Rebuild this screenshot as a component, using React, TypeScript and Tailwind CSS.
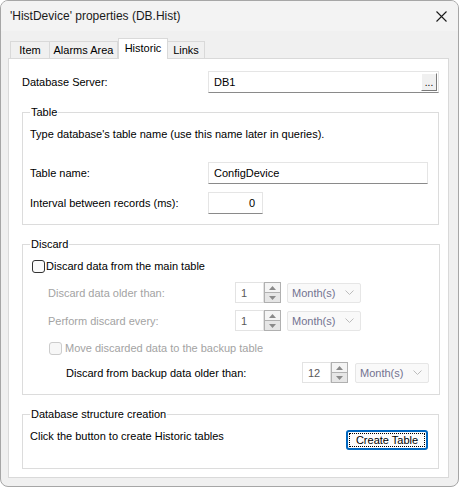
import React from 'react';

const tabs = [
    { id: 'item', label: 'Item', w: 'w-[40px]' },
    { id: 'alarms', label: 'Alarms Area', w: 'w-[69px]' },
    { id: 'historic', label: 'Historic', w: 'w-[50px]' },
    { id: 'links', label: 'Links', w: 'w-[38px]' },
];

const Spinner: React.FC<{ value: string }> = ({ value }) => (
    <div className="flex h-[21px]">
        <div className="w-[29px] h-full border border-[#e3e3e3] bg-white text-[#5a5a5a] pl-[5px] flex items-center">{value}</div>
        <div className="w-[17px] h-full flex flex-col">
            <div className="flex-1 border border-[#b0b0b0] bg-[#f4f4f4] flex items-center justify-center">
                <svg width="7" height="4" viewBox="0 0 7 4"><path d="M0 4 L3.5 0 L7 4 Z" fill="#8a8a8a" /></svg>
            </div>
            <div className="flex-1 border border-t-0 border-[#b0b0b0] bg-[#e6e6e6] flex items-center justify-center">
                <svg width="7" height="4" viewBox="0 0 7 4"><path d="M0 0 L3.5 4 L7 0 Z" fill="#8a8a8a" /></svg>
            </div>
        </div>
    </div>
);

const Combo: React.FC<{ gap: string }> = ({ gap }) => (
    <div className={`${gap} w-[74px] h-[20px] border border-[#e6e6e6] bg-[#f9f9f9] rounded-[2px] flex items-center justify-between pl-[4px] pr-[6px] text-[#727290]`}>
        <span>Month(s)</span>
        <svg width="9" height="5" viewBox="0 0 9 5"><path d="M0.5 0.5 L4.5 4.5 L8.5 0.5" stroke="#bcbcbc" fill="none" /></svg>
    </div>
);

const App: React.FC = () => {
    const active = 'historic';

    return (
        <div className="w-[459px] h-[487px] flex flex-col bg-[#f0f0f0] border border-[#a6a6a6] rounded-[8px] overflow-hidden text-[11px] leading-[14px] text-black font-['Liberation_Sans',Arial,sans-serif]">
            {/* Title bar */}
            <div className="h-[30px] bg-[#f3f3f3] flex items-center justify-between pl-[9px] pr-[11px]">
                <span className="text-[12px] text-[#1a1a1a]">'HistDevice' properties (DB.Hist)</span>
                <svg width="11" height="11" viewBox="0 0 11 11">
                    <path d="M0.5 0.5 L10.5 10.5 M10.5 0.5 L0.5 10.5" stroke="#1a1a1a" strokeWidth="1.1" />
                </svg>
            </div>

            <div className="flex-1 flex flex-col pt-[7px] pl-[7px] pr-[9px] pb-[8px]">
                {/* Tabs */}
                <div className="flex items-end h-[20px] pl-[2px]">
                    {tabs.map(tab => (
                        <div
                            key={tab.id}
                            className={`${tab.w} flex items-center justify-center border border-b-0 border-[#d9d9d9] ${tab.id === active
                                ? 'h-[21px] -mb-px bg-white relative z-10 pb-[2px]'
                                : 'h-[17px] bg-[#f0f0f0] -ml-px first:ml-0'
                                }`}
                        >
                            {tab.label}
                        </div>
                    ))}
                </div>

                {/* Panel */}
                <div className="flex-1 bg-white border border-[#d9d9d9] pt-[12px] pl-[13px] pr-[9px] flex flex-col">
                    <div className="flex items-center h-[22px]">
                        <span className="w-[186px]">Database Server:</span>
                        <div className="flex-1 h-full border border-[#e5e5e5] border-b-[#8a8a8a] flex items-center justify-between pl-[5px] pr-[1px]">
                            <span>DB1</span>
                            <div className="w-[16px] h-[18px] bg-[#f0f0f0] border border-[#ffffff] border-r-[#7a7a7a] border-b-[#7a7a7a] flex items-end justify-center pb-[3px] text-[10px] leading-[8px]">...</div>
                        </div>
                    </div>

                    {/* Table */}
                    <fieldset className="mt-[12px] border border-[#dcdcdc] pl-[7px] pr-[10px] pb-[10px]">
                        <legend className="px-[1px] leading-[14px]">Table</legend>
                        <p className="mt-[8px]">Type database's table name (use this name later in queries).</p>
                        <div className="mt-[21px] flex items-center h-[22px]">
                            <span className="w-[178px]">Table name:</span>
                            <div className="w-[220px] h-full border border-[#e5e5e5] border-b-[#8a8a8a] flex items-center pl-[5px]">ConfigDevice</div>
                        </div>
                        <div className="mt-[8px] flex items-center h-[22px]">
                            <span className="w-[178px]">Interval between records (ms):</span>
                            <div className="w-[55px] h-full border border-[#e5e5e5] border-b-[#8a8a8a] flex items-center justify-end pr-[7px]">0</div>
                        </div>
                    </fieldset>

                    {/* Discard */}
                    <fieldset className="mt-[12px] border border-[#dcdcdc] pl-[7px] pr-[10px] pb-[11px]">
                        <legend className="px-[1px] leading-[14px]">Discard</legend>
                        <div className="mt-[8px] flex items-center h-[14px]">
                            <div className="ml-[2px] w-[13px] h-[13px] border border-[#333333] rounded-[3px] bg-[#fbfbfb]" />
                            <span className="ml-[1px]">Discard data from the main table</span>
                        </div>
                        <div className="mt-[9px] flex items-center h-[21px]">
                            <span className="w-[205px] pl-[18px] text-[#a3a3a3]">Discard data older than:</span>
                            <Spinner value="1" />
                            <Combo gap="ml-[6px]" />
                        </div>
                        <div className="mt-[7px] flex items-center h-[21px]">
                            <span className="w-[205px] pl-[18px] text-[#a3a3a3]">Perform discard every:</span>
                            <Spinner value="1" />
                            <Combo gap="ml-[6px]" />
                        </div>
                        <div className="mt-[10px] flex items-center h-[14px]">
                            <div className="ml-[19px] w-[13px] h-[13px] border border-[#cccccc] rounded-[3px] bg-[#f7f7f7]" />
                            <span className="ml-[3px] text-[#a3a3a3]">Move discarded data to the backup table</span>
                        </div>
                        <div className="mt-[7px] flex items-center h-[21px]">
                            <span className="w-[272px] pl-[36px]">Discard from backup data older than:</span>
                            <Spinner value="12" />
                            <Combo gap="ml-[7px]" />
                        </div>
                    </fieldset>

                    {/* Database structure creation */}
                    <fieldset className="mt-[12px] border border-[#dcdcdc] pl-[7px] pr-[10px] pb-[18px]">
                        <legend className="px-[1px] leading-[14px]">Database structure creation</legend>
                        <div className="mt-[8px] flex items-start justify-between">
                            <span>Click the button to create Historic tables</span>
                            <div className="mt-[1px] w-[82px] h-[20px] border-2 border-[#0067c0] rounded-[3px] bg-[#fdfdfd] p-[1px]">
                                <div className="w-full h-full border border-dotted border-black flex items-center justify-center">Create Table</div>
                            </div>
                        </div>
                    </fieldset>
                </div>
            </div>
        </div>
    );
};

export default App;
